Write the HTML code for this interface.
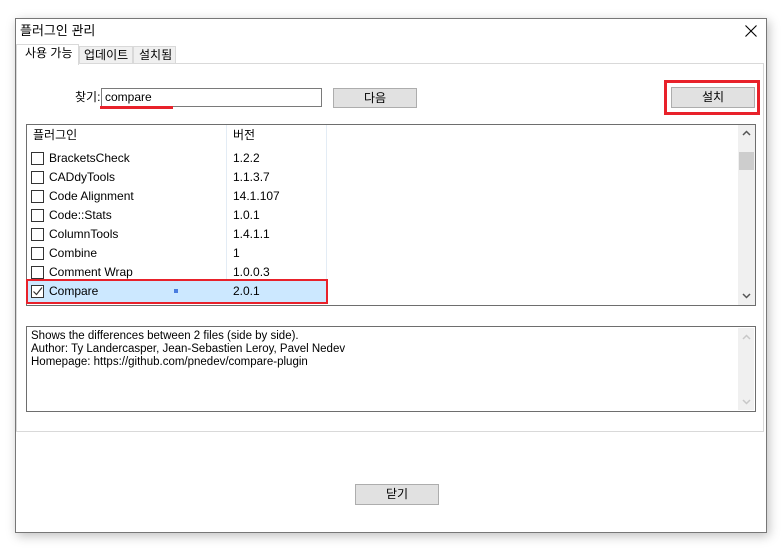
<!DOCTYPE html>
<html><head><meta charset="utf-8"><style>
*{box-sizing:border-box;margin:0;padding:0}
body{width:784px;height:553px;background:#fff;position:relative;overflow:hidden;font-family:"Segoe UI","Liberation Sans","Noto Sans CJK KR",sans-serif;font-size:12px;color:#000}
.a{position:absolute}
.win{left:15px;top:18px;width:752px;height:515px;border:1px solid #777;background:#fff;box-shadow:2px 3px 10px rgba(0,0,0,.25)}
.btn{position:absolute;background:#e1e1e1;border:1px solid #adadad;text-align:center;line-height:18px;font-size:12px}
.row{position:absolute;left:27px;width:299px;height:19px}
.cb{position:absolute;left:4px;top:3px;width:13px;height:13px;border:1px solid #333;background:#fff}
.nm{position:absolute;left:22px;top:1px;line-height:17px}
.vr{position:absolute;left:206px;top:1px;line-height:17px}
</style></head><body>
<div class="a win"></div>
<div class="a" style="left:20px;top:21px;font-size:13px;line-height:20px">플러그인 관리</div>
<svg class="a" style="left:745px;top:25px" width="12" height="12"><path d="M0.5 0.5L11.5 11.5M11.5 0.5L0.5 11.5" stroke="#000" stroke-width="1.1"/></svg>
<div class="a" style="left:16px;top:63px;width:748px;height:369px;border:1px solid #d9d9d9;background:#fff"></div>
<div class="a" style="left:16px;top:44px;width:63px;height:21px;border:1px solid #d9d9d9;border-bottom:none;background:#fff;line-height:17px;padding-left:8px">사용 가능</div>
<div class="a" style="left:79px;top:46px;width:54px;height:18px;border:1px solid #d9d9d9;background:#f0f0f0;line-height:16px;padding-left:4px">업데이트</div>
<div class="a" style="left:133px;top:46px;width:43px;height:18px;border:1px solid #d9d9d9;background:#f0f0f0;line-height:16px;padding-left:5px">설치됨</div>
<div class="a" style="left:75px;top:88px;line-height:18px">찾기:</div>
<div class="a" style="left:101px;top:88px;width:221px;height:19px;border:1px solid #7a7a7a;padding-left:3px;line-height:17px">compare</div>
<div class="a" style="left:100px;top:106px;width:73px;height:3px;background:#e8212a"></div>
<div class="btn" style="left:333px;top:88px;width:84px;height:20px">다음</div>
<div class="a" style="left:664px;top:80px;width:96px;height:35px;border:3px solid #e8212a"></div>
<div class="btn" style="left:671px;top:87px;width:84px;height:21px">설치</div>
<div class="a" style="left:26px;top:124px;width:730px;height:182px;border:1px solid #6e6e6e;background:#fff"></div>
<div class="a" style="left:226px;top:125px;width:1px;height:156px;background:#e3ecf5"></div>
<div class="a" style="left:326px;top:125px;width:1px;height:156px;background:#e3ecf5"></div>
<div class="a" style="left:738px;top:125px;width:17px;height:180px;background:#f0f0f0"></div>
<div class="a" style="left:739px;top:152px;width:15px;height:18px;background:#cdcdcd"></div>
<svg class="a" style="left:742px;top:130px" width="9" height="6"><path d="M1 5L4.5 1.5L8 5" stroke="#555" stroke-width="1.5" fill="none"/></svg>
<svg class="a" style="left:742px;top:293px" width="9" height="6"><path d="M1 1L4.5 4.5L8 1" stroke="#555" stroke-width="1.5" fill="none"/></svg>
<div class="a" style="left:33px;top:126px;line-height:19px">플러그인</div>
<div class="a" style="left:233px;top:126px;line-height:19px">버전</div>
<div class="row" style="top:149px"><div class="cb"></div><div class="nm">BracketsCheck</div><div class="vr">1.2.2</div></div>
<div class="row" style="top:168px"><div class="cb"></div><div class="nm">CADdyTools</div><div class="vr">1.1.3.7</div></div>
<div class="row" style="top:187px"><div class="cb"></div><div class="nm">Code Alignment</div><div class="vr">14.1.107</div></div>
<div class="row" style="top:206px"><div class="cb"></div><div class="nm">Code::Stats</div><div class="vr">1.0.1</div></div>
<div class="row" style="top:225px"><div class="cb"></div><div class="nm">ColumnTools</div><div class="vr">1.4.1.1</div></div>
<div class="row" style="top:244px"><div class="cb"></div><div class="nm">Combine</div><div class="vr">1</div></div>
<div class="row" style="top:263px"><div class="cb"></div><div class="nm">Comment Wrap</div><div class="vr">1.0.0.3</div></div>
<div class="row" style="top:281px;height:21px;background:#cce8ff"><div class="cb" style="top:4px"><svg width="11" height="11" style="position:absolute;left:0;top:0"><path d="M1.5 5.5L4.5 8.5L10 1.5" stroke="#333" stroke-width="1.2" fill="none"/></svg></div><div class="nm" style="top:2px">Compare</div><div class="vr" style="top:2px">2.0.1</div></div>
<div class="a" style="left:26px;top:279px;width:302px;height:25px;border:2px solid #e8212a"></div>
<div class="a" style="left:174px;top:289px;width:4px;height:4px;background:#4a7de0"></div>
<div class="a" style="left:26px;top:326px;width:730px;height:86px;border:1px solid #6e6e6e;background:#fff"></div>
<div class="a" style="left:738px;top:328px;width:16px;height:82px;background:#f0f0f0"></div>
<svg class="a" style="left:742px;top:334px" width="9" height="6"><path d="M1 5L4.5 1.5L8 5" stroke="#c8c8c8" stroke-width="1.5" fill="none"/></svg>
<svg class="a" style="left:742px;top:399px" width="9" height="6"><path d="M1 1L4.5 4.5L8 1" stroke="#c8c8c8" stroke-width="1.5" fill="none"/></svg>
<div class="a" style="left:31px;top:330px;font-size:11.5px;line-height:13px">Shows the differences between 2 files (side by side).<br>Author: Ty Landercasper, Jean-Sebastien Leroy, Pavel Nedev<br>Homepage: https://github.com/pnedev/compare-plugin</div>
<div class="btn" style="left:355px;top:484px;width:84px;height:21px">닫기</div>
</body></html>
